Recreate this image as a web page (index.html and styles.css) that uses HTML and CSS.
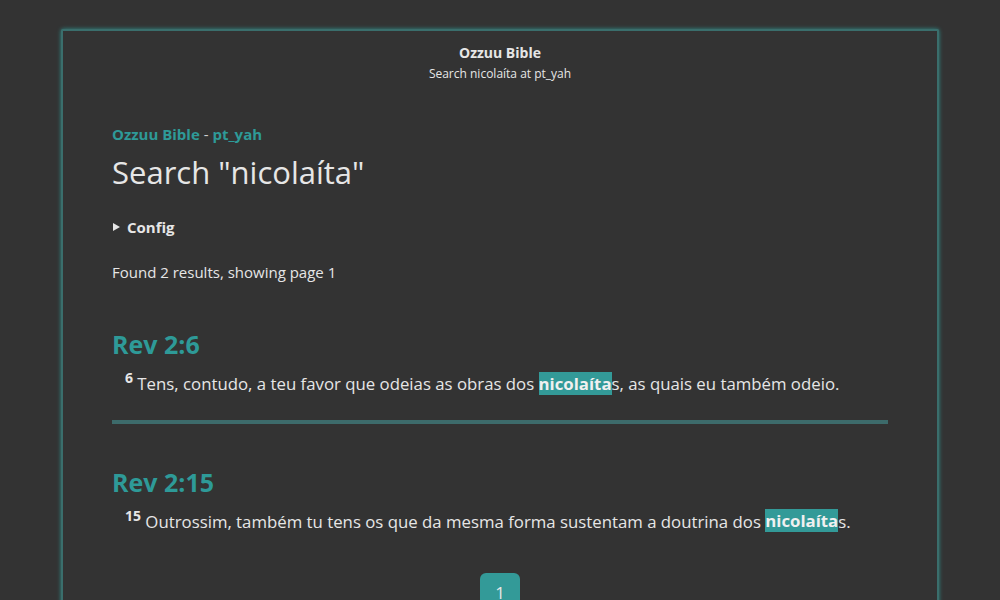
FILE: index.html
```html
<!DOCTYPE html>
<html lang="pt">
<head>
<meta charset="utf-8">
<title>Search nicolaíta</title>
<link rel="stylesheet" href="styles.css">
</head>
<body>
<div class="page">
  <header class="top">
    <div class="site">Ozzuu Bible</div>
    <div class="sub">Search nicolaíta at pt_yah</div>
  </header>
  <main class="content">
    <nav class="crumbs"><a href="#">Ozzuu Bible</a> <span class="dash">-</span> <a href="#">pt_yah</a></nav>
    <h1 class="title">Search "nicolaíta"</h1>
    <details class="config"><summary>Config</summary></details>
    <p class="found">Found 2 results, showing page 1</p>
    <section class="result">
      <h2 class="ref">Rev 2:6</h2>
      <p class="verse"><sup>6</sup> Tens, contudo, a teu favor que odeias as obras dos <mark>nicolaíta</mark>s, as quais eu também odeio.</p>
    </section>
    <hr class="sep">
    <section class="result">
      <h2 class="ref">Rev 2:15</h2>
      <p class="verse"><sup>15</sup> Outrossim, também tu tens os que da mesma forma sustentam a doutrina dos <mark>nicolaíta</mark>s.</p>
    </section>
    <div class="pager"><a class="pg" href="#">1</a></div>
  </main>
</div>
</body>
</html>
```

FILE: styles.css
```css
html, body {
  margin: 0;
  padding: 0;
  background: #333333;
  color: #e6e6e6;
  font-family: "Open Sans", "Noto Sans", sans-serif;
}
body {
  padding: 29px 61px 0 61px;
  height: 600px;
  box-sizing: border-box;
  overflow: hidden;
}
.page {
  border: 2px solid #3a6e6c;
  border-bottom: none;
  box-shadow: 0 0 4px #2f8a87;
  border-radius: 2px 2px 0 0;
  height: 700px;
  box-sizing: border-box;
}
.top {
  text-align: center;
  padding-top: 12px;
}
.site {
  font-weight: 700;
  font-size: 14px;
  line-height: 20px;
}
.sub {
  font-size: 12px;
  line-height: 20px;
  margin-top: 1px;
}
.content {
  padding: 0 49px;
}
.crumbs {
  margin-top: 40px;
  font-size: 15px;
  font-weight: 700;
  color: #2e9a98;
  line-height: 20px;
}
.crumbs a { color: #2e9a98; text-decoration: none; }
.crumbs .dash { color: #cfcfcf; font-weight: 400; }
.title {
  font-weight: 400;
  font-size: 31px;
  margin: 8px 0 0;
  line-height: 40px;
}
.config {
  margin-top: 24px;
  font-size: 15px;
  font-weight: 700;
}
.config summary {
  line-height: 22px;
  cursor: pointer;
  list-style: none;
  display: flex;
  align-items: center;
}
.config summary::-webkit-details-marker { display: none; }
.config summary::before {
  content: "";
  width: 0;
  height: 0;
  border-top: 4px solid transparent;
  border-bottom: 4px solid transparent;
  border-left: 7px solid #e6e6e6;
  margin: 0 7px 0 1px;
}
.found {
  font-size: 15px;
  margin: 23px 0 0;
  padding-bottom: 3px;
  line-height: 22px;
}
.result { margin: 0; }
.ref {
  color: #2e9a98;
  font-size: 25px;
  font-weight: 700;
  margin: 41px 0 0;
  line-height: 34px;
}
.verse {
  font-size: 16.8px;
  margin: 4px 0 0;
  padding-left: 13px;
  line-height: 26px;
}
.verse sup {
  font-weight: 700;
  font-size: 14px;
}
mark {
  background: #339a98;
  color: #f0f0f0;
  font-weight: 700;
}
.sep {
  border: none;
  height: 4px;
  background: #3d6b6b;
  margin: 23px 0 0;
}
.pager {
  display: flex;
  justify-content: center;
  margin-top: 39px;
}
.pg {
  display: block;
  width: 40px;
  height: 40px;
  background: #339a98;
  border-radius: 6px;
  color: #e6e6e6;
  text-decoration: none;
  text-align: center;
  line-height: 40px;
  font-size: 17px;
}
```
